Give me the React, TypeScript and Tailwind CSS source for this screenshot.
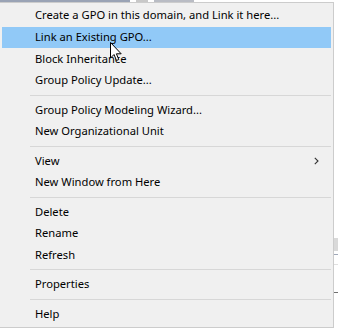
import React from "react";

type Entry = { label: string; sep?: false; hl?: boolean; sub?: boolean } | { sep: true };

const entries: Entry[] = [
  { label: "Create a GPO in this domain, and Link it here..." },
  { label: "Link an Existing GPO...", hl: true },
  { label: "Block Inheritance" },
  { label: "Group Policy Update..." },
  { sep: true },
  { label: "Group Policy Modeling Wizard..." },
  { label: "New Organizational Unit" },
  { sep: true },
  { label: "View", sub: true },
  { label: "New Window from Here" },
  { sep: true },
  { label: "Delete" },
  { label: "Rename" },
  { label: "Refresh" },
  { sep: true },
  { label: "Properties" },
  { sep: true },
  { label: "Help" },
];

export default function App() {
  return (
    <div
      className="relative w-[338px] h-[328px] bg-white overflow-hidden flex flex-col"
      style={{ fontFamily: '"Noto Sans", "Open Sans", Arial, sans-serif' }}
    >
      <div className="h-[2px] flex">
        <div className="w-[130px] h-[2px] bg-[#9aa3b5]" />
        <div className="w-[6px]" />
        <div className="w-[12px] h-[2px] bg-[#c8c8c8]" />
        <div className="w-[6px]" />
        <div className="w-[40px] h-[2px] bg-[#b9bcc4]" />
      </div>
      <div className="flex flex-1">
        <div className="w-[334px] h-[326px] bg-[#f0f0f0] border-t border-r border-b border-[#cccccc] pt-[2px] pb-[1.8px] flex flex-col">
          {entries.map((e, i) =>
            e.sep ? (
              <div key={i} className="h-[7.8px] flex items-center pl-[30px] pr-[2px]">
                <div className="h-px w-full bg-[#d7d7d7]" />
              </div>
            ) : (
              <div
                key={i}
                className={
                  "h-[21.6px] mx-[2px] flex items-center pl-[33px] pr-[12px] text-[11.2px] text-black " +
                  (e.hl ? "bg-[#91c9f7]" : "")
                }
              >
                <span className="flex-1 whitespace-nowrap">{e.label}</span>
                {e.sub && (
                  <svg width="5" height="8" viewBox="0 0 5 8">
                    <path d="M0.8 0.8 L4 4 L0.8 7.2" fill="none" stroke="#333" strokeWidth="1.1" />
                  </svg>
                )}
              </div>
            )
          )}
        </div>
        <div className="flex-1 flex flex-col">
          <div className="h-[236px]" />
          <div className="h-[13px] bg-[#d9d9d9]" />
          <div className="h-[3px]" />
          <div className="h-px bg-[#a0a8b8]" />
          <div className="h-[9px]" />
          <div className="h-px bg-[#e0e0e0]" />
          <div className="h-[27px]" />
          <div className="h-px bg-[#707070]" />
        </div>
      </div>
      <svg
        className="absolute left-[110px] top-[42px]"
        width="13"
        height="20"
        viewBox="0 0 13 20"
      >
        <path
          d="M0.5 0.5 L0.5 16 L4 12.5 L6.5 18.5 L8.8 17.5 L6.4 11.8 L11.2 11.8 Z"
          fill="#fff"
          stroke="#000"
          strokeWidth="1"
          strokeLinejoin="miter"
        />
      </svg>
    </div>
  );
}
